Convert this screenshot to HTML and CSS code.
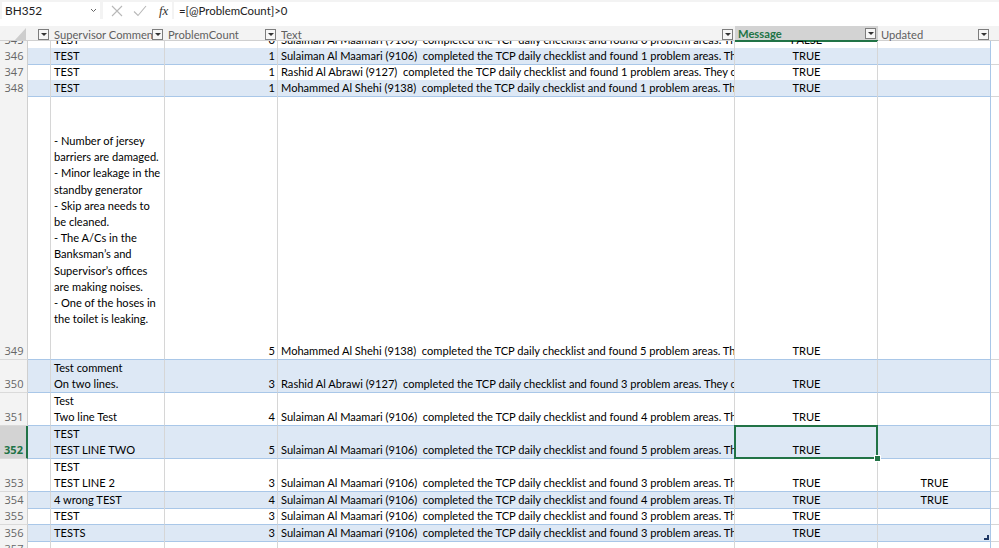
FILE: index.html
```html
<!DOCTYPE html>
<html>
<head>
<meta charset="utf-8">
<link rel="stylesheet" href="styles.css">
</head>
<body>
<div class="fbar">
  <div class="namebox"><span>BH352</span><svg class="chev" width="7" height="5" viewBox="0 0 7 5"><polyline points="1,1 3.5,3.5 6,1" fill="none" stroke="#666" stroke-width="1"/></svg></div>
  <div class="fbtns">
    <svg width="12" height="12" viewBox="0 0 12 12"><path d="M1 1 L11 11 M11 1 L1 11" stroke="#b8b8b8" stroke-width="1.1" fill="none"/></svg>
    <svg width="14" height="12" viewBox="0 0 14 12"><polyline points="1,6.5 5,10.5 13,1" stroke="#b8b8b8" stroke-width="1.1" fill="none"/></svg>
    <span class="fx">fx</span>
  </div>
  <div class="formula">=[@ProblemCount]&gt;0</div>
</div>

<div class="grid colhead">
  <div class="corner"><svg width="11" height="12" viewBox="0 0 11 12"><polygon points="11,0 11,12 0,12" fill="#cdcdcd"/></svg></div>
  <div class="hc"><span class="ht"></span><span class="dd"></span></div>
  <div class="hc"><span class="ht">Supervisor Comment</span><span class="dd"></span></div>
  <div class="hc"><span class="ht">ProblemCount</span><span class="dd"></span></div>
  <div class="hc"><span class="ht">Text</span><span class="dd"></span></div>
  <div class="hc hsel"><span class="ht">Message</span><span class="dd"></span></div>
  <div class="hc"><span class="ht">Updated</span><span class="dd"></span></div>
  <div class="hc hlast"></div>
</div>

<div class="sheet">
  <div class="rows">
    <div class="grid row first">
      <div class="rh">345</div><div class="c"></div><div class="c">TEST</div><div class="c num">0</div>
      <div class="c txt">Sulaiman Al Maamari (9106)  completed the TCP daily checklist and found 0 problem areas. There were no issues.</div>
      <div class="c ctr">FALSE</div><div class="c ctr u"></div><div class="c x"></div>
    </div>
    <div class="grid row band">
      <div class="rh">346</div><div class="c"></div><div class="c">TEST</div><div class="c num">1</div>
      <div class="c txt">Sulaiman Al Maamari (9106)  completed the TCP daily checklist and found 1 problem areas. The details are below.</div>
      <div class="c ctr">TRUE</div><div class="c ctr u"></div><div class="c x"></div>
    </div>
    <div class="grid row">
      <div class="rh">347</div><div class="c"></div><div class="c">TEST</div><div class="c num">1</div>
      <div class="c txt">Rashid Al Abrawi (9127)  completed the TCP daily checklist and found 1 problem areas. They contained the following.</div>
      <div class="c ctr">TRUE</div><div class="c ctr u"></div><div class="c x"></div>
    </div>
    <div class="grid row band">
      <div class="rh">348</div><div class="c"></div><div class="c">TEST</div><div class="c num">1</div>
      <div class="c txt">Mohammed Al Shehi (9138)  completed the TCP daily checklist and found 1 problem areas. The details are below.</div>
      <div class="c ctr">TRUE</div><div class="c ctr u"></div><div class="c x"></div>
    </div>
    <div class="grid row h264">
      <div class="rh">349</div><div class="c"></div>
      <div class="c top">- Number of jersey
barriers are damaged.
- Minor leakage in the
standby generator
- Skip area needs to
be cleaned.
- The A/Cs in the
Banksman’s and
Supervisor’s offices
are making noises.
- One of the hoses in
the toilet is leaking.</div>
      <div class="c num">5</div>
      <div class="c txt">Mohammed Al Shehi (9138)  completed the TCP daily checklist and found 5 problem areas. The details are below.</div>
      <div class="c ctr">TRUE</div><div class="c ctr u"></div><div class="c x"></div>
    </div>
    <div class="grid row band h33">
      <div class="rh">350</div><div class="c"></div><div class="c">Test comment
On two lines.</div><div class="c num">3</div>
      <div class="c txt">Rashid Al Abrawi (9127)  completed the TCP daily checklist and found 3 problem areas. They contained the following.</div>
      <div class="c ctr">TRUE</div><div class="c ctr u"></div><div class="c x"></div>
    </div>
    <div class="grid row h33">
      <div class="rh">351</div><div class="c"></div><div class="c">Test
Two line Test</div><div class="c num">4</div>
      <div class="c txt">Sulaiman Al Maamari (9106)  completed the TCP daily checklist and found 4 problem areas. The details are below.</div>
      <div class="c ctr">TRUE</div><div class="c ctr u"></div><div class="c x"></div>
    </div>
    <div class="grid row band h33">
      <div class="rh act">352</div><div class="c"></div><div class="c">TEST
TEST LINE TWO</div><div class="c num">5</div>
      <div class="c txt">Sulaiman Al Maamari (9106)  completed the TCP daily checklist and found 5 problem areas. The details are below.</div>
      <div class="c ctr sel">TRUE</div><div class="c ctr u"></div><div class="c x"></div>
    </div>
    <div class="grid row h33">
      <div class="rh">353</div><div class="c"></div><div class="c">TEST
TEST LINE 2</div><div class="c num">3</div>
      <div class="c txt">Sulaiman Al Maamari (9106)  completed the TCP daily checklist and found 3 problem areas. The details are below.</div>
      <div class="c ctr">TRUE</div><div class="c ctr u">TRUE</div><div class="c x"></div>
    </div>
    <div class="grid row band">
      <div class="rh">354</div><div class="c"></div><div class="c">4 wrong TEST</div><div class="c num">4</div>
      <div class="c txt">Sulaiman Al Maamari (9106)  completed the TCP daily checklist and found 4 problem areas. The details are below.</div>
      <div class="c ctr">TRUE</div><div class="c ctr u">TRUE</div><div class="c x"></div>
    </div>
    <div class="grid row h17">
      <div class="rh">355</div><div class="c"></div><div class="c">TEST</div><div class="c num">3</div>
      <div class="c txt">Sulaiman Al Maamari (9106)  completed the TCP daily checklist and found 3 problem areas. The details are below.</div>
      <div class="c ctr">TRUE</div><div class="c ctr u"></div><div class="c x"></div>
    </div>
    <div class="grid row band">
      <div class="rh">356</div><div class="c"></div><div class="c">TESTS</div><div class="c num">3</div>
      <div class="c txt">Sulaiman Al Maamari (9106)  completed the TCP daily checklist and found 3 problem areas. The details are below.</div>
      <div class="c ctr">TRUE</div><div class="c ctr u resize"></div><div class="c x"></div>
    </div>
    <div class="grid row last">
      <div class="rh">357</div><div class="c"></div><div class="c"></div><div class="c"></div>
      <div class="c"></div><div class="c"></div><div class="c u"></div><div class="c x"></div>
    </div>
  </div>
</div>
</body>
</html>
```

FILE: styles.css
```css
* { box-sizing: border-box; }
html, body { margin: 0; padding: 0; background: #fff; }
body {
  width: 999px;
  height: 548px;
  overflow: hidden;
  font-family: Lato, "Liberation Sans", sans-serif;
  color: #000;
}

/* formula bar */
.fbar {
  display: flex;
  height: 19px;
  padding-top: 2px;
  background: #f3f3f3;
}
.namebox {
  margin-left: 2px;
  width: 98px;
  background: #fff;
  display: flex;
  align-items: center;
  justify-content: space-between;
  padding: 0 3px 0 3px;
  font-family: Lato, sans-serif;
  font-size: 11.8px;
  color: #222;
}
.fbtns {
  margin-left: 3px;
  width: 69px;
  background: #fff;
  display: flex;
  align-items: center;
  padding-left: 8px;
  gap: 10px;
}
.fx {
  font-family: "Liberation Serif", serif;
  font-style: italic;
  font-size: 13px;
  color: #333;
  margin-left: 2px;
}
.formula {
  margin-left: 2px;
  flex: 1;
  background: #fff;
  font-family: Lato, sans-serif;
  font-size: 11.4px;
  color: #222;
  padding-left: 5px;
  line-height: 17px;
}

/* grid */
.grid {
  display: grid;
  grid-template-columns: 28px 23px 114px 113px 457px 143px 113px 1fr;
}

.colhead {
  margin-top: 7px;
  height: 15px;
  background: #f3f3f3;
  border-bottom: 1px solid #d0d0d0;
}
.corner {
  display: flex;
  justify-content: flex-end;
  align-items: flex-start;
  padding: 2px 2px 0 0;
}
.hc {
  display: flex;
  align-items: center;
  min-width: 0;
  padding: 0 2px 0 3px;
  font-family: Lato, sans-serif;
  font-size: 11.2px;
  color: #5f5f5f;
}
.ht {
  flex: 1;
  min-width: 0;
  overflow: hidden;
  white-space: nowrap;
}
.dd {
  flex: none;
  width: 11px;
  height: 11px;
  border: 1px solid #7d7d7d;
  background: #f6f6f6;
  position: relative;
}
.dd::after {
  content: "";
  position: absolute;
  left: 2px;
  top: 3px;
  border-left: 3px solid transparent;
  border-right: 3px solid transparent;
  border-top: 3px solid #333;
}
.hsel {
  background: #d3d3d3;
  color: #217346;
  font-weight: bold;
  height: 16px;
  border-bottom: 2px solid #217346;
}

/* sheet */
.sheet {
  height: 507px;
  overflow: hidden;
}
.row {
  height: 16px;
  font-size: 11.1px;
  line-height: 16px;
}
.row.first { margin-top: -9px; }
.row.h17 { height: 17px; }
.row.h33 { height: 33px; }
.row.h264 { height: 264px; }

.rh {
  background: #f3f3f3;
  border-right: 1px solid #cfcfcf;
  border-bottom: 1px solid #dadada;
  font-family: "Open Sans", sans-serif;
  font-size: 11px;
  color: #666;
  display: flex;
  align-items: flex-end;
  justify-content: center;
  padding-left: 1px;
}
.rh.act {
  background: #d3d3d3;
  color: #217346;
  font-weight: bold;
  border-right: 2px solid #217346;
}

.c {
  border-right: 1px solid #d6d6d6;
  border-bottom: 1px solid #a9c7e8;
  padding: 0 2px 0 3px;
  overflow: hidden;
  white-space: pre;
  display: flex;
  align-items: flex-end;
  min-width: 0;
}
.band .c { background: #dde8f5; }
.band .c.x { background: #fff; }
.c.u { border-right-color: #a9c7e8; }
.c.x { border-bottom-color: #d6d6d6; border-right: none; }
.num { justify-content: flex-end; }
.ctr { justify-content: center; }
.txt { white-space: pre; }
.top {
  align-items: flex-start;
  padding-top: 37px;
  line-height: 16.2px;
}

.sel { position: relative; overflow: visible; }
.sel::after {
  content: "";
  position: absolute;
  left: -1px;
  top: -1px;
  right: -1px;
  bottom: -1px;
  border: 2px solid #217346;
}
.sel::before {
  content: "";
  position: absolute;
  right: -4px;
  bottom: -4px;
  width: 5px;
  height: 5px;
  background: #217346;
  border: 1px solid #fff;
  z-index: 2;
}
.resize { position: relative; }
.resize::after {
  content: "";
  position: absolute;
  right: 1px;
  bottom: 1px;
  width: 3px;
  height: 3px;
  border-right: 2px solid #1f3864;
  border-bottom: 2px solid #1f3864;
}
```
